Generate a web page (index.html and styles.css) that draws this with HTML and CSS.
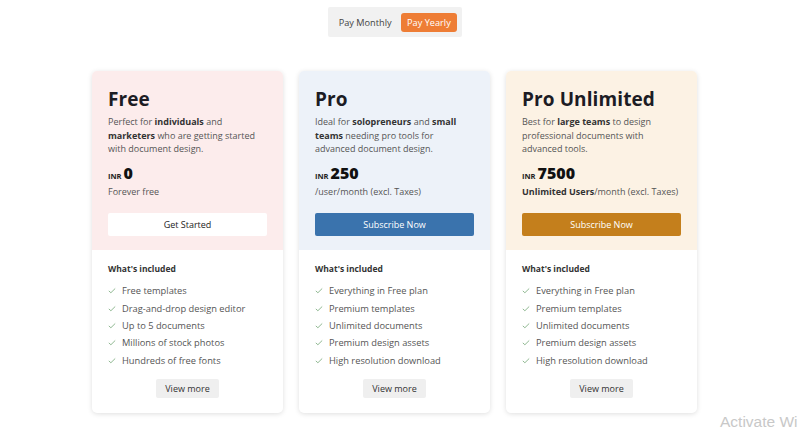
FILE: index.html
```html
<!DOCTYPE html>
<html>
<head>
<meta charset="utf-8">
<link rel="stylesheet" href="styles.css">
</head>
<body>
<div class="page">
  <div class="toggle-row">
    <div class="toggle">
      <span class="opt">Pay Monthly</span>
      <span class="opt active">Pay Yearly</span>
    </div>
  </div>
  <div class="cards">
    <div class="card">
      <div class="top free">
        <h2>Free</h2>
        <p class="desc">Perfect for <b>individuals</b> and <b>marketers</b> who are getting started with document design.</p>
        <div class="price"><span class="cur">INR</span><span class="amt">0</span></div>
        <div class="per">Forever free</div>
        <button class="cta white">Get Started</button>
      </div>
      <div class="bottom">
        <div class="inc">What's included</div>
        <ul>
          <li><svg viewBox="0 0 10 8"><path d="M1 4.5 L3.6 6.8 L9 1.5"/></svg>Free templates</li>
          <li><svg viewBox="0 0 10 8"><path d="M1 4.5 L3.6 6.8 L9 1.5"/></svg>Drag-and-drop design editor</li>
          <li><svg viewBox="0 0 10 8"><path d="M1 4.5 L3.6 6.8 L9 1.5"/></svg>Up to 5 documents</li>
          <li><svg viewBox="0 0 10 8"><path d="M1 4.5 L3.6 6.8 L9 1.5"/></svg>Millions of stock photos</li>
          <li><svg viewBox="0 0 10 8"><path d="M1 4.5 L3.6 6.8 L9 1.5"/></svg>Hundreds of free fonts</li>
        </ul>
        <div class="more-row"><button class="more">View more</button></div>
      </div>
    </div>
    <div class="card">
      <div class="top pro">
        <h2>Pro</h2>
        <p class="desc">Ideal for <b>solopreneurs</b> and <b>small teams</b> needing pro tools for advanced document design.</p>
        <div class="price"><span class="cur">INR</span><span class="amt">250</span></div>
        <div class="per">/user/month (excl. Taxes)</div>
        <button class="cta blue">Subscribe Now</button>
      </div>
      <div class="bottom">
        <div class="inc">What's included</div>
        <ul>
          <li><svg viewBox="0 0 10 8"><path d="M1 4.5 L3.6 6.8 L9 1.5"/></svg>Everything in Free plan</li>
          <li><svg viewBox="0 0 10 8"><path d="M1 4.5 L3.6 6.8 L9 1.5"/></svg>Premium templates</li>
          <li><svg viewBox="0 0 10 8"><path d="M1 4.5 L3.6 6.8 L9 1.5"/></svg>Unlimited documents</li>
          <li><svg viewBox="0 0 10 8"><path d="M1 4.5 L3.6 6.8 L9 1.5"/></svg>Premium design assets</li>
          <li><svg viewBox="0 0 10 8"><path d="M1 4.5 L3.6 6.8 L9 1.5"/></svg>High resolution download</li>
        </ul>
        <div class="more-row"><button class="more">View more</button></div>
      </div>
    </div>
    <div class="card">
      <div class="top unl">
        <h2>Pro Unlimited</h2>
        <p class="desc">Best for <b>large teams</b> to design professional documents with advanced tools.</p>
        <div class="price"><span class="cur">INR</span><span class="amt">7500</span></div>
        <div class="per"><b>Unlimited Users</b>/month (excl. Taxes)</div>
        <button class="cta gold">Subscribe Now</button>
      </div>
      <div class="bottom">
        <div class="inc">What's included</div>
        <ul>
          <li><svg viewBox="0 0 10 8"><path d="M1 4.5 L3.6 6.8 L9 1.5"/></svg>Everything in Free plan</li>
          <li><svg viewBox="0 0 10 8"><path d="M1 4.5 L3.6 6.8 L9 1.5"/></svg>Premium templates</li>
          <li><svg viewBox="0 0 10 8"><path d="M1 4.5 L3.6 6.8 L9 1.5"/></svg>Unlimited documents</li>
          <li><svg viewBox="0 0 10 8"><path d="M1 4.5 L3.6 6.8 L9 1.5"/></svg>Premium design assets</li>
          <li><svg viewBox="0 0 10 8"><path d="M1 4.5 L3.6 6.8 L9 1.5"/></svg>High resolution download</li>
        </ul>
        <div class="more-row"><button class="more">View more</button></div>
      </div>
    </div>
  </div>
</div>
<div class="watermark">Activate Wi</div>
</body>
</html>
```

FILE: styles.css
```css
* { box-sizing: border-box; }
html, body { margin: 0; padding: 0; background: #fff; }
body {
  font-family: "Open Sans", "Liberation Sans", sans-serif;
  color: #222;
  width: 800px;
  height: 430px;
  overflow: hidden;
  position: relative;
}
.page { width: 790px; }
.toggle-row { display: flex; justify-content: center; padding-top: 7px; }
.toggle {
  display: flex;
  align-items: center;
  gap: 9px;
  background: #f1f1f1;
  height: 30px;
  padding: 0 5px 0 11px;
  border-radius: 2px;
}
.opt { font-size: 9.2px; color: #444; }
.opt.active {
  background: #ee7d35;
  color: #fff;
  height: 19px;
  line-height: 19px;
  padding: 0 6.5px;
  border-radius: 3px;
}
.cards {
  display: flex;
  gap: 16px;
  margin: 34px 0 0 92px;
}
.card {
  width: 191px;
  height: 342px;
  border-radius: 5px;
  background: #fff;
  box-shadow: 0 1px 5px rgba(0,0,0,0.13);
  overflow: hidden;
  display: flex;
  flex-direction: column;
}
.top {
  height: 179px;
  padding: 17px 16px 0 16px;
}
.top.free { background: #fcecec; }
.top.pro { background: #edf2f9; }
.top.unl { background: #fcf2e4; }
h2 {
  margin: 0;
  font-size: 19px;
  font-weight: 700;
  color: #1c1c24;
  line-height: 22px;
  letter-spacing: 0.1px;
}
.desc {
  margin: 5px 0 0 0;
  font-size: 9px;
  line-height: 13.5px;
  color: #555;
}
.desc b, .per b { color: #333; font-weight: 700; }
.price {
  display: flex;
  align-items: baseline;
  gap: 2px;
  margin-top: 6px;
  height: 20px;
}
.cur { font-size: 7.5px; font-weight: 700; color: #222; }
.amt { font-size: 16px; font-weight: 800; color: #111; }
.per { font-size: 9px; color: #555; margin-top: 3px; line-height: 13px; }
.cta {
  display: block;
  width: 100%;
  height: 23px;
  margin-top: 15px;
  border: none;
  border-radius: 2px;
  font-family: inherit;
  font-size: 9px;
  cursor: pointer;
}
.cta.white { background: #fff; color: #222; }
.cta.blue { background: #3a73ad; color: #fff; }
.cta.gold { background: #c47f1c; color: #fff; }
.bottom { padding: 13px 16px 0 16px; flex: 1; }
.inc { font-size: 8.5px; font-weight: 700; color: #333; line-height: 12px; }
ul { list-style: none; margin: 7px 0 0 0; padding: 0; }
li {
  display: flex;
  align-items: center;
  font-size: 9.3px;
  color: #555;
  height: 17.4px;
}
li svg {
  width: 8px;
  height: 7px;
  margin-right: 6px;
  fill: none;
  stroke: #8ab58c;
  stroke-width: 1.2;
}
.more-row { display: flex; justify-content: center; margin-top: 10px; }
.more {
  background: #efefef;
  border: none;
  border-radius: 2px;
  font-family: inherit;
  font-size: 9px;
  color: #333;
  height: 19px;
  padding: 0 9px;
}
.watermark {
  position: absolute;
  left: 720px;
  top: 413px;
  font-family: "Liberation Sans", sans-serif;
  font-size: 15.5px;
  color: #c8c8c8;
  white-space: nowrap;
}
```
